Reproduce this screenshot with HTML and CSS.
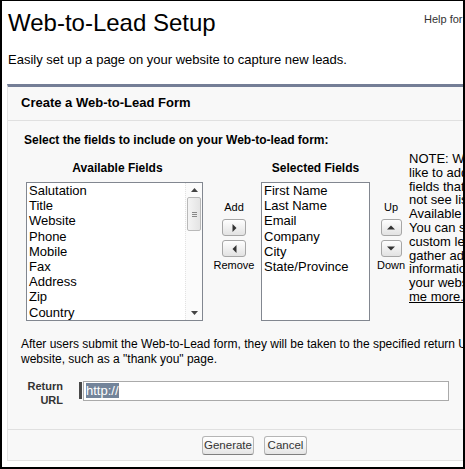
FILE: index.html
```html
<!DOCTYPE html>
<html>
<head>
<meta charset="utf-8">
<link rel="stylesheet" href="styles.css">
</head>
<body>
<div class="frame">
  <div class="page-head">
    <h1 class="title">Web-to-Lead Setup</h1>
    <a class="help">Help for this Page</a>
  </div>
  <p class="intro">Easily set up a page on your website to capture new leads.</p>
  <div class="panel">
    <div class="panel-head">Create a Web-to-Lead Form</div>
    <div class="panel-body">
      <div class="select-label">Select the fields to include on your Web-to-lead form:</div>
      <div class="picker">
        <div class="col col-avail">
          <div class="col-title">Available Fields</div>
          <div class="listbox listbox-avail">
            <div class="items">
              <div>Salutation</div><div>Title</div><div>Website</div><div>Phone</div><div>Mobile</div><div>Fax</div><div>Address</div><div>Zip</div><div>Country</div>
            </div>
            <div class="scrollbar">
              <svg class="arr arr-up" width="7" height="4" viewBox="0 0 7 4"><path d="M0 4 L3.5 0 L7 4Z" fill="#444"/></svg>
              <div class="thumb"><span></span><span></span><span></span></div>
              <div class="track"></div>
              <svg class="arr arr-down" width="7" height="4" viewBox="0 0 7 4"><path d="M0 0 L3.5 4 L7 0Z" fill="#444"/></svg>
            </div>
          </div>
        </div>
        <div class="ctrl ctrl-add">
          <div class="ctrl-label ctrl-top">Add</div>
          <div class="btn-ico btn-wide"><svg width="5" height="8" viewBox="0 0 5 8"><path d="M0.5 0 L4.5 4 L0.5 8Z" fill="#333"/></svg></div>
          <div class="btn-ico btn-wide"><svg width="5" height="8" viewBox="0 0 5 8"><path d="M4.5 0 L0.5 4 L4.5 8Z" fill="#333"/></svg></div>
          <div class="ctrl-label">Remove</div>
        </div>
        <div class="col col-sel">
          <div class="col-title">Selected Fields</div>
          <div class="listbox listbox-sel">
            <div class="items">
              <div>First Name</div><div>Last Name</div><div>Email</div><div>Company</div><div>City</div><div>State/Province</div>
            </div>
          </div>
        </div>
        <div class="ctrl ctrl-up">
          <div class="ctrl-label ctrl-top">Up</div>
          <div class="btn-ico btn-narrow"><svg width="8" height="5" viewBox="0 0 8 5"><path d="M0 4.5 L4 0.5 L8 4.5Z" fill="#333"/></svg></div>
          <div class="btn-ico btn-narrow"><svg width="8" height="5" viewBox="0 0 8 5"><path d="M0 0.5 L4 4.5 L8 0.5Z" fill="#333"/></svg></div>
          <div class="ctrl-label">Down</div>
        </div>
        <div class="note">NOTE: Would you<br>like to add<br>fields that you do<br>not see listed in<br>Available<br>You can set up<br>custom lead fields to<br>gather additional<br>information from<br>your website. Tell<br><a class="tell">me more.</a></div>
      </div>
      <p class="after">After users submit the Web-to-Lead form, they will be taken to the specified return URL on your<br>website, such as a "thank you" page.</p>
      <div class="url-row">
        <label class="url-label">Return<br>URL</label>
        <div class="req"></div>
        <div class="url-input"><span class="sel">http://</span></div>
      </div>
    </div>
    <div class="panel-foot">
      <button class="btn btn-gen">Generate</button>
      <button class="btn btn-cancel">Cancel</button>
    </div>
  </div>
</div>
</body>
</html>
```

FILE: styles.css
```css
html, body {
  margin: 0;
  padding: 0;
  background: #fff;
}
body {
  font-family: "Liberation Sans", Arial, sans-serif;
  color: #000;
}
.frame {
  box-sizing: border-box;
  width: 465px;
  height: 469px;
  border: 2px solid #000;
  border-top-width: 1px;
  overflow: hidden;
}
.page-head {
  display: flex;
  justify-content: space-between;
  align-items: flex-start;
  width: 600px;
}
.title {
  margin: 8px 0 0 6px;
  font-weight: normal;
  font-size: 24px;
  line-height: 28px;
}
.help {
  font-size: 11px;
  color: #333;
  margin: 12px 0 0 0;
  width: 178px;
}
.intro {
  margin: 15px 0 0 6px;
  font-size: 13px;
  line-height: 16px;
}
.panel {
  margin: 16px 0 0 5px;
  width: 560px;
  border-top: 3px solid #747e96;
  border-left: 1px solid #e4e4e4;
  border-bottom: 1px solid #e2e2e2;
  background: #f8f8f8;
}
.panel-head {
  font-weight: bold;
  font-size: 13px;
  line-height: 16px;
  padding: 8px 0 9px 13px;
  border-bottom: 1px solid #e0e0e0;
}
.panel-body {
  padding: 12px 0 0 16px;
}
.select-label {
  font-weight: bold;
  font-size: 12px;
  line-height: 14px;
}
.picker {
  display: flex;
  align-items: flex-start;
  margin: 14px 0 0 2px;
  white-space: nowrap;
}
.col {
  display: flex;
  flex-direction: column;
  align-items: center;
}
.col-title {
  font-weight: bold;
  font-size: 12px;
  line-height: 14px;
  margin-bottom: 7px;
}
.col-avail .col-title { margin-left: 6px; }
.listbox {
  box-sizing: border-box;
  height: 139px;
  border: 1px solid #828790;
  background: #fff;
  display: flex;
  font-size: 13px;
  line-height: 15.2px;
}
.listbox-avail { width: 177px; }
.listbox-sel { width: 109px; }
.items {
  flex: 1;
  padding: 0 0 0 2px;
  overflow: hidden;
}
.scrollbar {
  width: 16px;
  display: flex;
  flex-direction: column;
  align-items: center;
  border-left: 1px dotted #e2e2e2;
  background: #fbfbfb;
}
.arr-up { margin: 5px 0 5px; }
.arr-down { margin: 0 0 5px; }
.thumb {
  box-sizing: border-box;
  width: 14px;
  height: 34px;
  border: 1px solid #b9b9b9;
  border-radius: 2px;
  background: linear-gradient(to right, #f4f4f4, #e4e4e4);
  display: flex;
  flex-direction: column;
  justify-content: center;
  align-items: center;
  gap: 1px;
}
.thumb span {
  display: block;
  width: 5px;
  height: 1px;
  background: #888;
}
.track { flex: 1; }
.ctrl {
  display: flex;
  flex-direction: column;
  align-items: center;
  font-size: 11px;
  line-height: 13px;
  margin-top: 40px;
}
.ctrl-add {
  width: 50px;
  margin-left: 6px;
  margin-right: 2px;
}
.ctrl-up {
  width: 36px;
  margin-left: 3px;
}
.ctrl-top { margin-bottom: 5px; }
.btn-ico {
  box-sizing: border-box;
  height: 17px;
  border: 1px solid #a6a6a6;
  border-radius: 3px;
  background: linear-gradient(#fefefe, #f0f0f0 50%, #e2e2e2);
  display: flex;
  align-items: center;
  justify-content: center;
  margin-bottom: 4px;
}
.btn-ico + .btn-ico { margin-bottom: 2px; }
.btn-wide { width: 24px; }
.btn-narrow { width: 21px; }
.note {
  font-size: 13px;
  line-height: 13.8px;
  margin-top: -9px;
  color: #000;
}
.tell { text-decoration: underline; }
.after {
  margin: 16px 0 0 -3px;
  font-size: 12px;
  line-height: 15px;
  white-space: nowrap;
}
.url-row {
  display: flex;
  align-items: flex-start;
  margin-top: 14px;
}
.url-label {
  width: 39px;
  text-align: right;
  font-weight: bold;
  font-size: 11px;
  line-height: 14px;
  color: #333;
  margin-top: -2px;
}
.req {
  width: 3px;
  height: 17px;
  background: #4a4a4a;
  margin: 1px 0 0 16px;
}
.url-input {
  box-sizing: border-box;
  width: 366px;
  height: 20px;
  margin-left: 1px;
  border: 1px solid #aaa;
  background: #fff;
  font-size: 13px;
  line-height: 16px;
  padding: 1px 2px;
}
.sel {
  background: #73849a;
  color: #fff;
}
.panel-foot {
  margin-top: 22px;
  border-top: 1px solid #e0e0e0;
  display: flex;
  gap: 10px;
  padding: 6px 0 5px 194px;
}
.btn {
  box-sizing: border-box;
  height: 19px;
  font-family: "Liberation Sans", Arial, sans-serif;
  font-size: 11.5px;
  line-height: 15px;
  padding: 0;
  border: 1px solid #b5b5b5;
  border-bottom-color: #7f7f7f;
  border-radius: 3px;
  background: linear-gradient(#fff, #f4f4f4 50%, #e5e5e5);
  color: #333;
}
.btn-gen { width: 52px; }
.btn-cancel { width: 43px; }
```
